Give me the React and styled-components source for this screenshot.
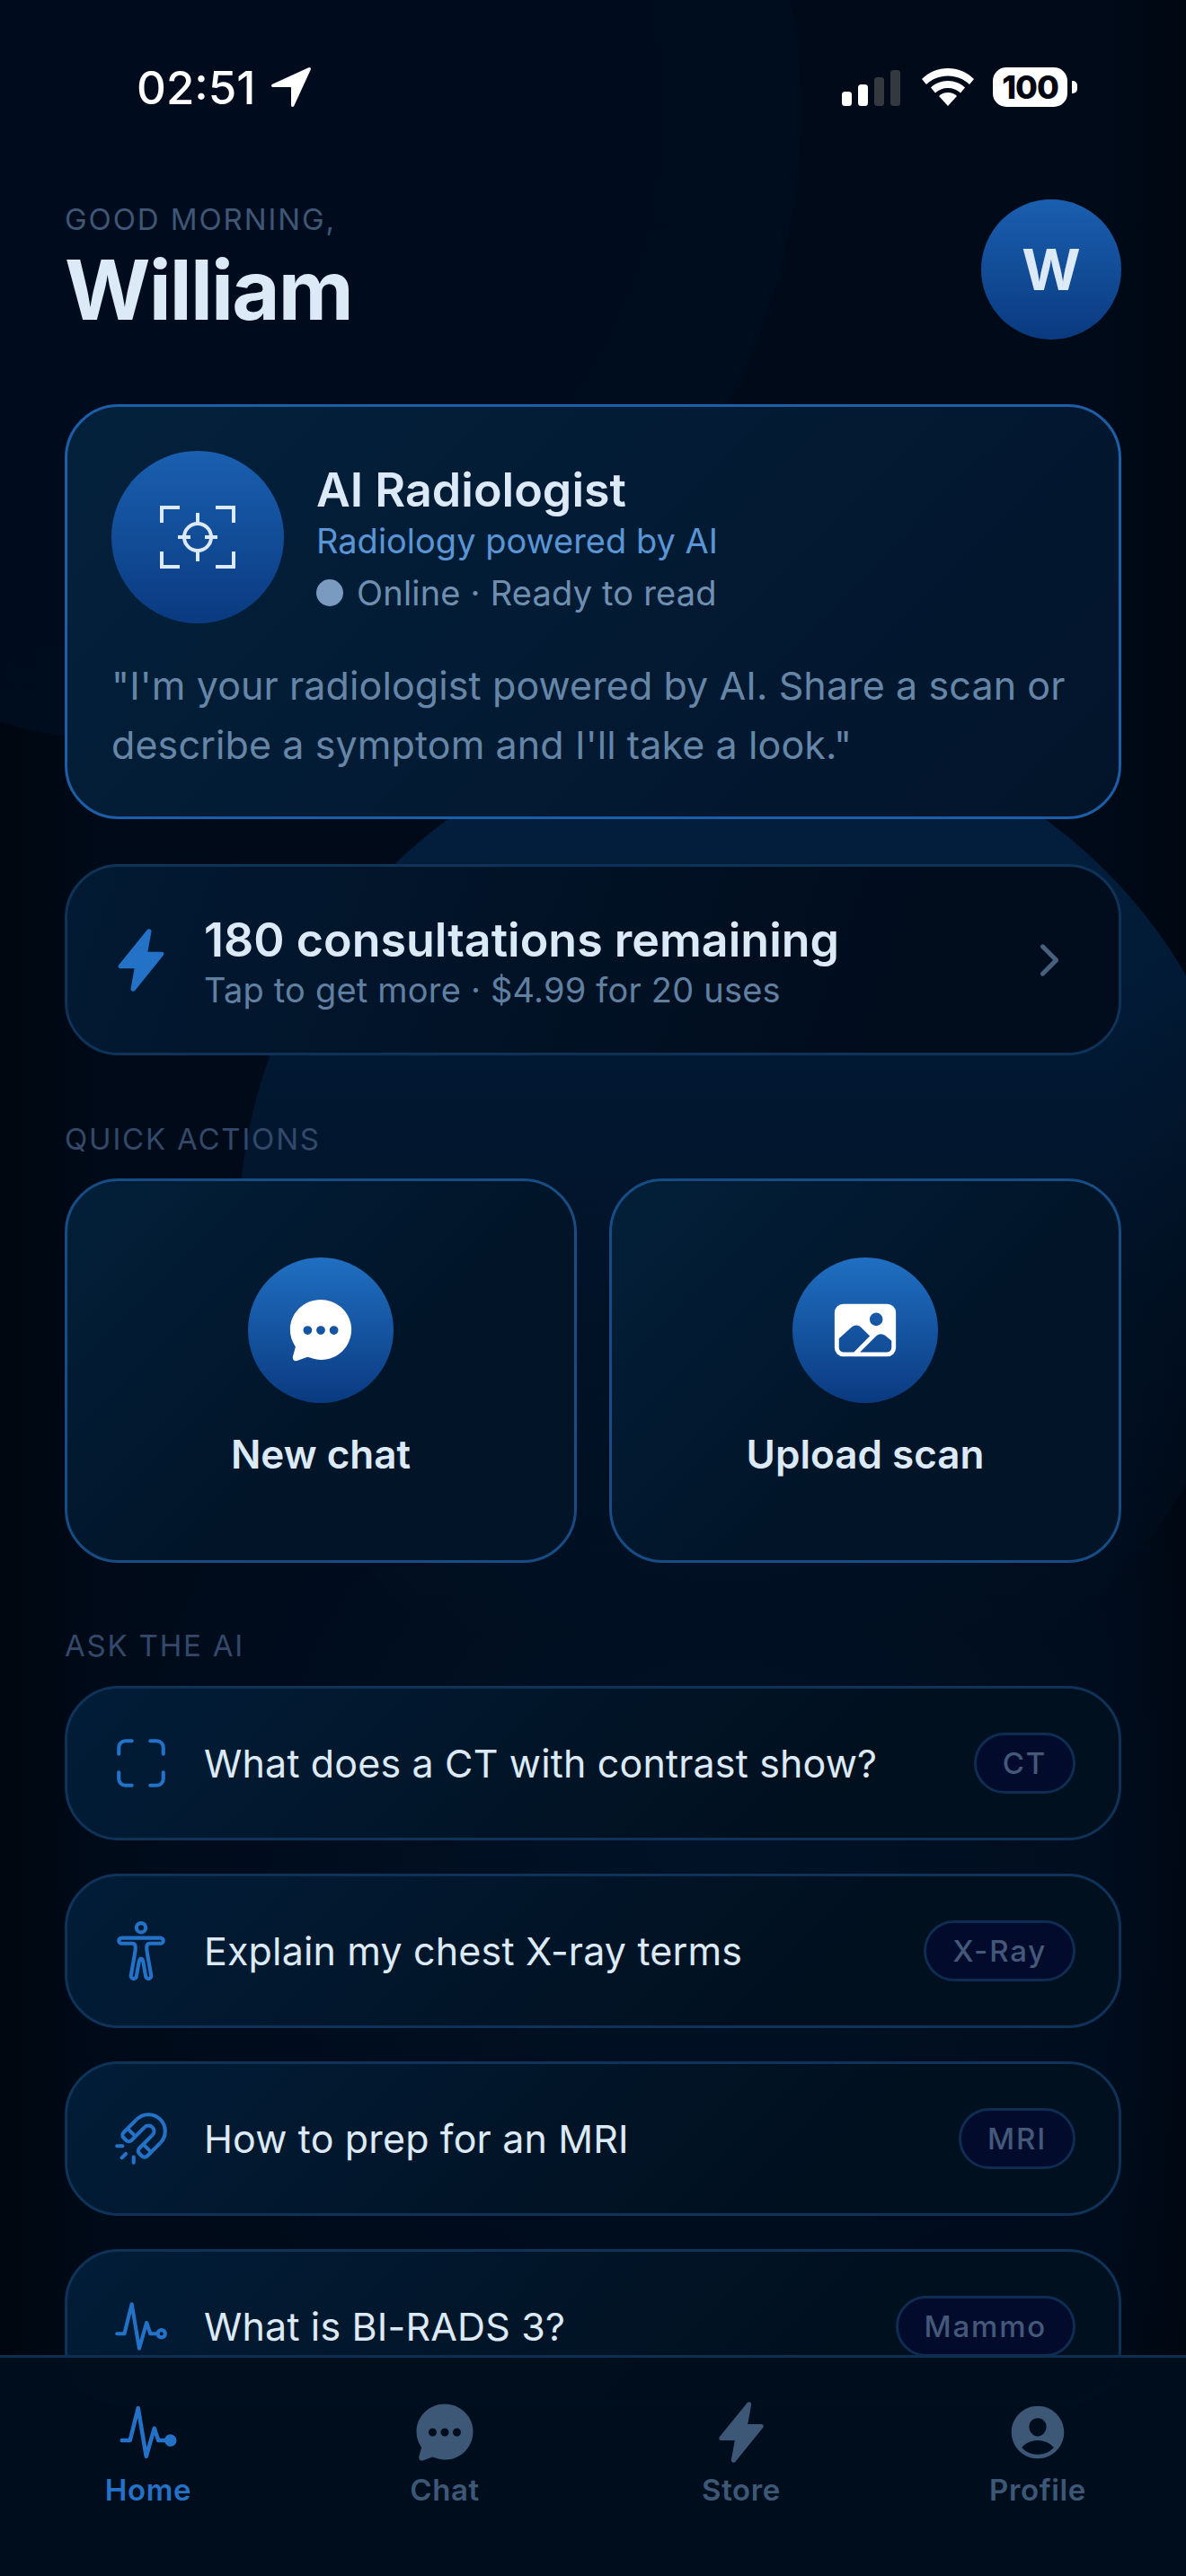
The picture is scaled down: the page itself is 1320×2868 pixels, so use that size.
import styled, { createGlobalStyle } from "styled-components";
import {
  IoBodyOutline,
  IoChatbubbleEllipses,
  IoChevronForward,
  IoFlash,
  IoImage,
  IoMagnetOutline,
  IoNavigate,
  IoPersonCircle,
  IoPulse,
  IoPulseOutline,
  IoScanOutline,
} from "react-icons/io5";

const GlobalStyle = createGlobalStyle`
  html, body { margin: 0; padding: 0; background: #000a18; }
  * { box-sizing: border-box; }
`;

const Page = styled.div`
  position: relative;
  isolation: isolate;
  width: 1320px;
  height: 2868px;
  overflow: hidden;
  font-family: Inter, "Liberation Sans", sans-serif;
  color: #dce9f6;
  padding: 0 72px;
  background:
    radial-gradient(circle 707px at 185px 123px, rgba(0, 12, 29, 0.96) 0, rgba(0, 13, 31, 0.96) 99.7%, rgba(0, 13, 31, 0) 100%),
    linear-gradient(90deg, rgba(0, 4, 10, 0.6) 0, rgba(0, 4, 10, 0) 110px),
    linear-gradient(270deg, rgba(0, 4, 10, 0.5) 0, rgba(0, 4, 10, 0) 90px),
    radial-gradient(circle 760px at 800px 2050px, rgba(4, 40, 82, 0.26) 0, rgba(4, 40, 82, 0) 100%),
    #000a18;

  /* big soft disc behind the middle of the page */
  &::before {
    content: "";
    position: absolute;
    z-index: -1;
    left: 266px;
    top: 804px;
    width: 1130px;
    height: 1130px;
    border-radius: 50%;
    background: linear-gradient(180deg, rgba(4, 42, 82, 0.68) 0, rgba(4, 42, 82, 0.54) 25%, rgba(4, 42, 82, 0.2) 60%, rgba(4, 42, 82, 0) 90%);
  }
`;

const StatusBar = styled.div`
  height: 194px;
  margin: 0 -72px -2px;
  padding: 0 133px 0 152px;
  display: flex;
  align-items: center;
  justify-content: space-between;
  color: #fff;
`;

const Clock = styled.div`
  display: flex;
  align-items: center;
  gap: 12px;
  font-size: 51px;
  font-weight: 500;
  svg { font-size: 54px; }
`;

const StatusIcons = styled.div`
  display: flex;
  align-items: center;
  gap: 24px;
`;

const Battery = styled.div`
  position: relative;
  width: 83px;
  height: 44px;
  margin-left: -3px;
  margin-right: -1px;
  border-radius: 15px;
  background: #fff;
  color: #00060f;
  font-size: 36px;
  font-weight: 800;
  letter-spacing: -1px;
  display: flex;
  align-items: center;
  justify-content: center;
  &::after {
    content: "";
    position: absolute;
    right: -11px;
    top: 15px;
    width: 6px;
    height: 14px;
    border-radius: 0 5px 5px 0;
    background: #fff;
  }
`;

const Header = styled.header`
  height: 156px;
  margin-top: 30px;
  display: flex;
  align-items: flex-start;
  justify-content: space-between;
`;

const Greeting = styled.div`
  padding-top: 2px;
  display: flex;
  flex-direction: column;
`;

const Hello = styled.div`
  font-size: 33px;
  line-height: 40px;
  letter-spacing: 1.9px;
  color: #3f5674;
`;

const Name = styled.div`
  margin-top: 5px;
  font-size: 92px;
  line-height: 108px;
  font-weight: 700;
  letter-spacing: -1.8px;
  color: #dce9f6;
`;

const Avatar = styled.div`
  width: 156px;
  height: 156px;
  border-radius: 50%;
  background: linear-gradient(180deg, #1a5fb0, #0a3a80);
  font-size: 63px;
  font-weight: 700;
  display: flex;
  align-items: center;
  justify-content: center;
`;

const Hero = styled.section`
  margin-top: 72px;
  height: 462px;
  padding: 49px;
  border: 3px solid #1d5ea8;
  border-radius: 60px;
  background: linear-gradient(135deg, #04213c, #02142a);
`;

const HeroTop = styled.div`
  display: flex;
  align-items: center;
  gap: 36px;
`;

const HeroBadge = styled.div`
  width: 192px;
  height: 192px;
  border-radius: 50%;
  background: linear-gradient(180deg, #1a5fb0, #0a3a80);
  display: flex;
  align-items: center;
  justify-content: center;
  color: #dce9f6;
`;

const HeroText = styled.div`
  padding-top: 6px;
  display: flex;
  flex-direction: column;
`;

const HeroTitle = styled.div`
  font-size: 52px;
  line-height: 60px;
  font-weight: 600;
  color: #dce9f6;
`;

const HeroSub = styled.div`
  font-size: 38px;
  line-height: 52px;
  color: #5a96d6;
`;

const HeroStatus = styled.div`
  margin-top: 6px;
  display: flex;
  align-items: center;
  gap: 15px;
  font-size: 38px;
  line-height: 52px;
  letter-spacing: 0.2px;
  color: #6f8fb1;
`;

const StatusDot = styled.span`
  width: 30px;
  height: 30px;
  border-radius: 50%;
  background: #7a9bbf;
`;

const Quote = styled.p`
  margin: 36px 0 0;
  font-size: 43px;
  line-height: 66px;
  letter-spacing: 0.1px;
  color: #6686a8;
`;

const Credits = styled.section`
  margin-top: 50px;
  height: 213px;
  padding: 0 50px 0 52px;
  border: 3px solid #0f3358;
  border-radius: 60px;
  background: linear-gradient(110deg, #021a33, #010c1c 80%);
  display: flex;
  align-items: center;
  gap: 40px;
`;

const BoltBox = styled.div`
  width: 60px;
  display: flex;
  justify-content: center;
  color: #2472c8;
  svg { font-size: 74px; flex: none; }
`;

const CreditsText = styled.div`
  flex: 1;
  padding-top: 6px;
`;

const CreditsTitle = styled.div`
  font-size: 52px;
  line-height: 60px;
  font-weight: 600;
  color: #dce9f6;
`;

const CreditsSub = styled.div`
  font-size: 38px;
  line-height: 50px;
  letter-spacing: 0.2px;
  color: #6080a2;
`;

const Chevron = styled.div`
  color: #46607f;
  display: flex;
  svg { font-size: 54px; }
`;

const SectionLabel = styled.div`
  margin-top: ${(p) => p.$top}px;
  font-size: 33px;
  line-height: 40px;
  letter-spacing: 1.8px;
  color: #33496a;
`;

const Actions = styled.div`
  margin-top: 24px;
  display: grid;
  grid-template-columns: 1fr 1fr;
  gap: 36px;
`;

const ActionCard = styled.div`
  height: 428px;
  padding-top: 85px;
  border: 3px solid #174c85;
  border-radius: 60px;
  background: linear-gradient(135deg, #032039, #011428 60%);
  display: flex;
  flex-direction: column;
  align-items: center;
`;

const ActionBadge = styled.div`
  width: 162px;
  height: 162px;
  border-radius: 50%;
  background: linear-gradient(180deg, #206fc2, #0a3a80);
  color: #fff;
  display: flex;
  align-items: center;
  justify-content: center;
  svg { font-size: 78px; }
`;

const ActionLabel = styled.div`
  margin-top: 30px;
  font-size: 44px;
  line-height: 54px;
  font-weight: 600;
  color: #dce9f6;
`;

const Prompts = styled.div`
  margin-top: 25px;
  display: flex;
  flex-direction: column;
  gap: 37px;
`;

const Prompt = styled.div`
  flex: none;
  height: 172px;
  padding: 0 48px 0 52px;
  border: 3px solid #0f3358;
  border-radius: 60px;
  background: linear-gradient(135deg, #021d38, #01101f 70%);
  display: flex;
  align-items: center;
  gap: 40px;
`;

const PromptIcon = styled.div`
  width: 60px;
  display: flex;
  justify-content: center;
  color: #2472c8;
  svg { font-size: 66px; flex: none; }
`;

const PromptText = styled.div`
  flex: 1;
  font-size: 43px;
  letter-spacing: 0.15px;
  color: #dce9f6;
`;

const Tag = styled.span`
  height: 68px;
  padding: 0 29px;
  border: 3px solid #0f2c52;
  border-radius: 34px;
  background: #020b2b;
  font-size: 33px;
  letter-spacing: 1.8px;
  font-weight: 500;
  color: #44597a;
  display: flex;
  align-items: center;
`;

const TabBar = styled.nav`
  position: absolute;
  left: 0;
  right: 0;
  bottom: 0;
  height: 246px;
  padding-top: 47px;
  border-top: 3px solid #0d2e50;
  background: rgba(0, 14, 29, 0.95);
  display: grid;
  grid-template-columns: repeat(4, 1fr);
`;

const Tab = styled.div`
  display: flex;
  flex-direction: column;
  align-items: center;
  gap: 8px;
  color: ${(p) => (p.$active ? "#2472c8" : "#3d5876")};
  svg { font-size: 72px; }
`;

const TabLabel = styled.span`
  font-size: 33px;
  line-height: 40px;
  font-weight: 600;
  letter-spacing: 0.6px;
`;

const SignalIcon = () => (
  <svg width="66" height="42" viewBox="0 0 66 42">
    <rect x="1" y="26" width="11" height="16" rx="3.5" fill="#fff" />
    <rect x="19" y="18" width="11" height="24" rx="3.5" fill="#fff" />
    <rect x="37" y="10" width="11" height="32" rx="3.5" fill="#34393f" />
    <rect x="55" y="2" width="11" height="40" rx="3.5" fill="#34393f" />
  </svg>
);

const WifiIcon = () => (
  <svg width="58" height="42" viewBox="0 0 58 42" fill="#fff">
    <path d="M29 0C18 0 8 4 0 12l5 6c6.500-6 14.500-9.500 24-9.500S46.500 12 53 18l5-6C50 4 40 0 29 0z" />
    <path d="M29 14c-7.500 0-14 2.800-19 7.500l5 6c3.500-3.500 8.500-5.500 14-5.500s10.500 2 14 5.500l5-6C43 16.800 36.500 14 29 14z" />
    <path d="M29 27c-4 0-7.500 1.500-10 4l10 11 10-11c-2.500-2.500-6-4-10-4z" />
  </svg>
);

const TargetIcon = () => (
  <svg width="84" height="72" viewBox="0 0 84 72" fill="none" stroke="currentColor" strokeWidth="4">
    <path d="M2 20V3h20M62 3h20v17M2 52v17h20M62 69h20V52" />
    <circle cx="42" cy="36" r="15" />
    <path d="M42 9v14M42 49v14M20 36h14M50 36h14" />
  </svg>
);

const prompts = [
  { icon: <IoScanOutline />, text: "What does a CT with contrast show?", tag: "CT" },
  { icon: <IoBodyOutline />, text: "Explain my chest X-ray terms", tag: "X-Ray" },
  { icon: <IoMagnetOutline />, text: "How to prep for an MRI", tag: "MRI" },
  { icon: <IoPulseOutline />, text: "What is BI-RADS 3?", tag: "Mammo" },
];

const tabs = [
  { icon: <IoPulse />, label: "Home", active: true },
  { icon: <IoChatbubbleEllipses />, label: "Chat" },
  { icon: <IoFlash />, label: "Store" },
  { icon: <IoPersonCircle />, label: "Profile" },
];

const App = () => {
  return (
    <Page>
      <GlobalStyle />
      <StatusBar>
        <Clock>
          02:51
          <IoNavigate />
        </Clock>
        <StatusIcons>
          <SignalIcon />
          <WifiIcon />
          <Battery>100</Battery>
        </StatusIcons>
      </StatusBar>

      <Header>
        <Greeting>
          <Hello>GOOD MORNING,</Hello>
          <Name>William</Name>
        </Greeting>
        <Avatar>W</Avatar>
      </Header>

      <Hero>
        <HeroTop>
          <HeroBadge>
            <TargetIcon />
          </HeroBadge>
          <HeroText>
            <HeroTitle>AI Radiologist</HeroTitle>
            <HeroSub>Radiology powered by AI</HeroSub>
            <HeroStatus>
              <StatusDot />
              Online · Ready to read
            </HeroStatus>
          </HeroText>
        </HeroTop>
        <Quote>"I'm your radiologist powered by AI. Share a scan or describe a symptom and I'll take a look."</Quote>
      </Hero>

      <Credits>
        <BoltBox>
          <IoFlash />
        </BoltBox>
        <CreditsText>
          <CreditsTitle>180 consultations remaining</CreditsTitle>
          <CreditsSub>Tap to get more · $4.99 for 20 uses</CreditsSub>
        </CreditsText>
        <Chevron>
          <IoChevronForward />
        </Chevron>
      </Credits>

      <SectionLabel $top={73}>QUICK ACTIONS</SectionLabel>
      <Actions>
        <ActionCard>
          <ActionBadge>
            <IoChatbubbleEllipses />
          </ActionBadge>
          <ActionLabel>New chat</ActionLabel>
        </ActionCard>
        <ActionCard>
          <ActionBadge>
            <IoImage />
          </ActionBadge>
          <ActionLabel>Upload scan</ActionLabel>
        </ActionCard>
      </Actions>

      <SectionLabel $top={72}>ASK THE AI</SectionLabel>
      <Prompts>
        {prompts.map((p) => (
          <Prompt key={p.tag}>
            <PromptIcon>{p.icon}</PromptIcon>
            <PromptText>{p.text}</PromptText>
            <Tag>{p.tag}</Tag>
          </Prompt>
        ))}
      </Prompts>

      <TabBar>
        {tabs.map((t) => (
          <Tab key={t.label} $active={t.active}>
            {t.icon}
            <TabLabel>{t.label}</TabLabel>
          </Tab>
        ))}
      </TabBar>
    </Page>
  );
};

export default App;
